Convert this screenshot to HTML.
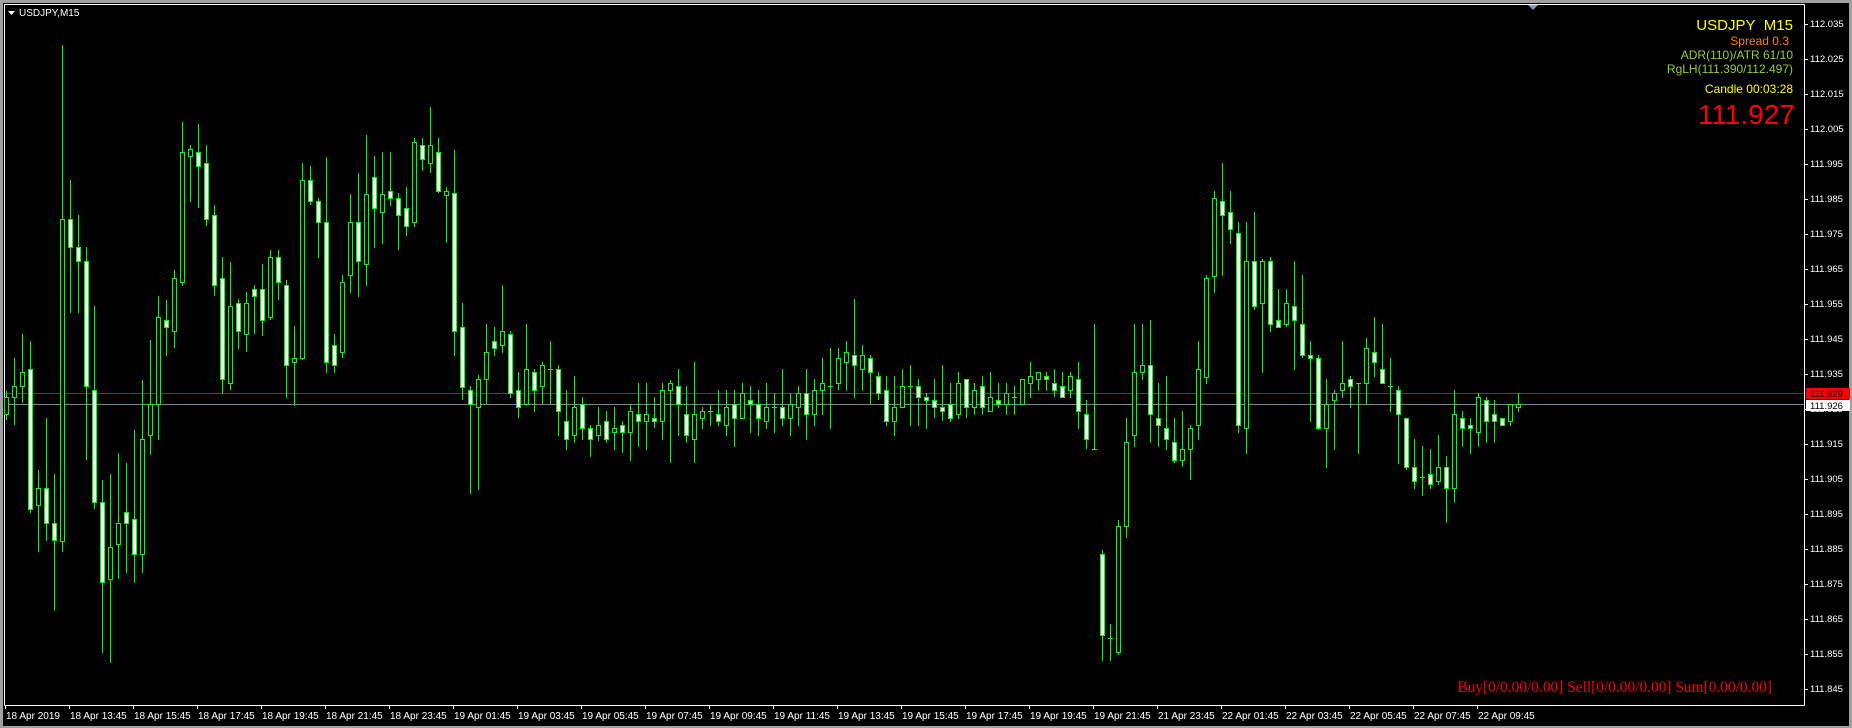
<!DOCTYPE html>
<html><head><meta charset="utf-8">
<style>
html,body{margin:0;padding:0;background:#000;width:1852px;height:728px;overflow:hidden}
#c{position:absolute;left:0;top:0}
</style></head>
<body>
<svg id="c" width="1852" height="728" xmlns="http://www.w3.org/2000/svg" font-family="Liberation Sans, sans-serif">
<rect x="0" y="0" width="1852" height="728" fill="#000"/>
<rect x="0" y="0" width="1852" height="3" fill="#a0a0a0"/>
<rect x="0" y="0" width="3" height="728" fill="#a0a0a0"/>
<rect x="0" y="726" width="1852" height="2" fill="#a0a0a0"/>
<rect x="1849" y="0" width="3" height="728" fill="#a0a0a0"/>
<line x1="4.5" y1="4.5" x2="1804.5" y2="4.5" stroke="#fff"/>
<line x1="4.5" y1="4.5" x2="4.5" y2="705.5" stroke="#fff"/>
<line x1="1804.5" y1="4.5" x2="1804.5" y2="705.5" stroke="#fff"/>
<line x1="4.5" y1="705.5" x2="1804.5" y2="705.5" stroke="#fff"/>
<polygon points="1528,5 1538,5 1533,10" fill="#8a9aa8"/>
<polygon points="8,11 15,11 11.5,15" fill="#fff"/>
<text x="19" y="16" font-size="10" fill="#fff">USDJPY,M15</text>
<g id="cs"></g>
<g id="ax"></g>
<g font-size="14" text-anchor="end">
<text x="1793" y="30" fill="#ffff00" font-size="15">USDJPY&#160; M15</text>
<text x="1789" y="45" fill="#ff8000" font-size="12">Spread 0.3</text>
<text x="1793" y="59" fill="#9acd32" font-size="12">ADR(110)/ATR 61/10</text>
<text x="1793" y="73" fill="#9acd32" font-size="12">RgLH(111.390/112.497)</text>
<text x="1793" y="93" fill="#ffff00" font-size="12">Candle 00:03:28</text>
<text x="1795" y="124" fill="#ff0000" font-size="28">111.927</text>
<text x="1772" y="692" fill="#ff0000" font-size="15.4" font-family="Liberation Serif, serif">Buy[0/0.00/0.00] Sell[0/0.00/0.00] Sum[0.00/0.00]</text>
</g>
</svg>
<script>
var D=[
[397,414,'B'],[386,397,'B',358,425],[372,386,'B',334,403],[369,509,'W',341,513],[488,505,'B',470,552],[488,523,'W',418,541],[523,540,'W',474,611],[219,541,'B',45,552],[219,247,'W',180,313],[247,261,'W',215,313],
[261,386,'W',247,460],[390,502,'W',306,509],[502,582,'W',480,653],[547,579,'B',474,663],[523,544,'B',453,579],[512,523,'W',463,573],[519,554,'W',430,583],[439,554,'B',380,573],[404,435,'B',340,455],[317,404,'B',296,440],
[320,327,'W',300,356],[278,331,'B',270,348],[152,282,'B',122,286],[149,156,'B',145,202],[152,166,'W',124,208],[163,219,'W',145,226],[215,285,'W',205,296],[278,379,'W',257,394],[306,383,'B',262,390],[303,331,'W',299,349],
[303,334,'B',292,352],[289,296,'W',285,334],[289,320,'W',264,336],[257,317,'B',250,320],[257,282,'W',250,300],[285,365,'W',280,398],[358,362,'B',326,406],[180,358,'B',163,360],[180,201,'W',166,205],[201,222,'W',198,258],
[222,362,'W',157,373],[345,365,'W',334,373],[282,352,'B',275,358],[222,275,'B',194,293],[222,261,'W',173,297],[194,264,'B',135,286],[177,208,'W',156,248],[194,212,'B',152,244],[191,198,'W',152,206],[198,215,'W',193,250],
[208,226,'W',187,236],[142,222,'B',138,227],[145,159,'W',138,171],[145,163,'B',107,173],[152,191,'W',138,193],[191,195,'B',187,243],[193,331,'W',150,356],[327,387,'W',303,400],[390,404,'W',386,494],[379,407,'B',375,490],
[352,379,'B',324,404],[341,348,'W',327,356],[331,345,'B',285,353],[334,393,'W',331,398],[390,407,'W',372,418],[369,404,'B',324,404],[372,390,'W',369,412],[365,386,'B',362,404],[369,369,'D',341,404],[369,411,'W',365,436],
[421,439,'W',390,450],[407,435,'B',376,443],[404,428,'W',397,440],[428,439,'W',425,457],[425,435,'B',407,441],[421,439,'W',411,443],[428,432,'B',407,450],[425,432,'W',421,453],[411,432,'B',404,461],[414,421,'W',383,447],
[414,421,'B',383,450],[418,421,'W',397,428],[390,421,'B',383,440],[383,390,'B',380,463],[386,404,'W',369,436],[414,435,'W',386,443],[414,439,'B',362,463],[411,418,'B',407,429],[411,411,'D',404,426],[414,421,'W',390,426],
[407,425,'B',390,436],[404,418,'W',390,447],[393,418,'B',383,418],[400,404,'W',386,433],[404,418,'W',390,436],[407,421,'B',383,429],[407,407,'D',393,433],[407,418,'W',369,426],[404,418,'B',393,436],[393,407,'B',386,426],
[393,414,'W',369,440],[390,414,'B',379,426],[383,390,'B',358,415],[386,386,'D',348,429],[358,383,'B',348,390],[352,362,'B',341,391],[355,365,'W',299,398],[355,369,'B',345,391],[358,372,'W',355,404],[376,393,'W',372,400],
[390,421,'W',376,426],[407,421,'B',376,436],[386,407,'B',369,407],[386,386,'D',365,426],[386,397,'W',379,426],[397,400,'W',393,429],[400,407,'W',379,418],[407,411,'W',365,421],[404,418,'W',383,422],[383,414,'B',372,419],
[379,407,'W',379,418],[390,407,'B',383,415],[386,407,'W',376,415],[397,411,'B',372,411],[400,404,'W',383,408],[393,404,'B',383,415],[397,397,'D',386,415],[379,404,'B',379,404],[376,383,'B',362,398],[372,379,'B',372,391],
[376,379,'W',372,391],[383,390,'W',369,397],[386,397,'W',372,397],[376,390,'B',372,398],[379,411,'W',362,429],[414,439,'W',400,449],[449,449,'D',324,449],[554,635,'W',550,661],[638,638,'D',624,661],[526,652,'B',520,655],
[442,526,'B',418,538],[372,435,'B',324,447],[365,372,'B',324,380],[365,414,'W',320,443],[418,425,'W',383,447],[428,439,'W',376,450],[442,460,'W',418,463],[449,460,'B',411,467],[428,449,'B',425,480],[369,425,'B',341,440],
[278,377,'B',275,384],[198,276,'B',191,293],[201,215,'W',163,276],[212,229,'W',191,244],[233,425,'W',222,433],[261,428,'B',222,454],[261,306,'W',212,310],[261,303,'B',259,373],[261,324,'W',257,332],[320,327,'W',289,327],
[303,324,'B',289,327],[306,320,'W',261,370],[324,355,'W',275,358],[355,358,'W',341,422],[358,428,'W',355,430],[404,428,'B',379,468],[393,400,'B',390,450],[383,390,'B',341,398],[379,386,'W',376,408],[383,383,'D',383,454],
[348,383,'B',338,405],[352,362,'W',317,377],[369,383,'W',324,383],[386,386,'D',358,412],[390,414,'W',386,464],[418,467,'W',418,470],[467,481,'W',439,489],[477,477,'D',446,496],[474,484,'W',449,489],[467,481,'B',435,485],
[467,488,'W',456,523],[414,488,'B',390,503],[418,428,'W',411,447],[425,428,'W',418,454],[397,432,'B',393,447],[400,421,'W',397,443],[414,421,'W',400,443],[418,425,'W',418,425],[404,421,'B',404,426],[404,407,'B',393,412]
];
var s='';
for(var i=0;i<D.length;i++){
 var d=D[i],cx=6+8*i,t=d[0],b=d[1],h=d[3]||t-6,l=d[4]||b+6;
 s+='<line x1="'+(cx+0.5)+'" y1="'+h+'" x2="'+(cx+0.5)+'" y2="'+l+'" stroke="#00ff00" stroke-width="1"/>';
 if(d[2]=='D'){s+='<line x1="'+(cx-2)+'" y1="'+(t+0.5)+'" x2="'+(cx+3)+'" y2="'+(t+0.5)+'" stroke="#00ff00"/>';}
 else{var hh=Math.max(b-t,2);s+='<rect x="'+(cx-1.5)+'" y="'+(t+0.5)+'" width="4" height="'+hh+'" fill="'+(d[2]=='W'?'#fff':'#000')+'" stroke="#00ff00" stroke-width="1"/>';}
}
s='<line x1="5" y1="393.5" x2="1804" y2="393.5" stroke="#e00000"/><line x1="5" y1="404.5" x2="1804" y2="404.5" stroke="#778899"/>'+s;
document.getElementById('cs').innerHTML=s;
var a='';
for(var k=0;k<20;k++){
 var p=(112.035-k*0.01).toFixed(3),y=23.7+k*35;
 a+='<line x1="1805" y1="'+(Math.round(y)+0.5)+'" x2="1808" y2="'+(Math.round(y)+0.5)+'" stroke="#fff"/>';
 a+='<text x="1810" y="'+(y+3.5)+'" font-size="9.5" fill="#fff">'+p+'</text>';
}
a+='<rect x="1806" y="388" width="44" height="11" fill="#ff0000"/><text x="1810" y="397" font-size="9.5" fill="#000">111.929</text>';
a+='<rect x="1806" y="400" width="44" height="11" fill="#fff"/><text x="1810" y="409" font-size="9.5" fill="#000">111.926</text>';
var L=['18 Apr 2019','18 Apr 13:45','18 Apr 15:45','18 Apr 17:45','18 Apr 19:45','18 Apr 21:45','18 Apr 23:45','19 Apr 01:45','19 Apr 03:45','19 Apr 05:45','19 Apr 07:45','19 Apr 09:45','19 Apr 11:45','19 Apr 13:45','19 Apr 15:45','19 Apr 17:45','19 Apr 19:45','19 Apr 21:45','21 Apr 23:45','22 Apr 01:45','22 Apr 03:45','22 Apr 05:45','22 Apr 07:45','22 Apr 09:45'];
for(var j=0;j<L.length;j++){
 var x=5+64*j;
 a+='<line x1="'+(x+0.5)+'" y1="706" x2="'+(x+0.5)+'" y2="709" stroke="#fff"/>';
 a+='<text x="'+(x+1)+'" y="719" font-size="10" fill="#fff">'+L[j]+'</text>';
}
document.getElementById('ax').innerHTML=a;
</script>
</body></html>
